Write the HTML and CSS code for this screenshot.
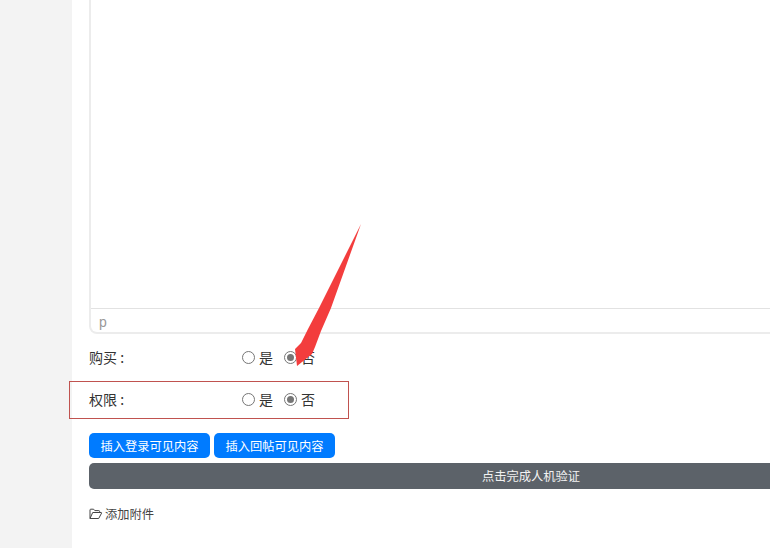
FILE: index.html
```html
<!DOCTYPE html>
<html lang="en">
  <head>
    <meta charset="UTF-8" />
    <title>发帖</title>
    <link rel="stylesheet" href="styles.css">
  </head>
  <body>
    <div class="sidebar"></div>
    <main class="content">
      <div class="editor">
        <div class="editor-body"></div>
        <div class="editor-path">p</div>
      </div>

      <div class="option-row option-buy">
        <div class="option-label">购买 :</div>
        <div class="option-radios">
          <label class="radio"><span class="radio-dot"></span>是</label>
          <label class="radio"><span class="radio-dot checked"></span>否</label>
        </div>
      </div>
      <div class="option-row option-perm">
        <div class="option-label">权限 :</div>
        <div class="option-radios">
          <label class="radio"><span class="radio-dot"></span>是</label>
          <label class="radio"><span class="radio-dot checked"></span>否</label>
        </div>
      </div>

      <div class="insert-buttons">
        <button class="btn btn-blue">插入登录可见内容</button>
        <button class="btn btn-blue">插入回帖可见内容</button>
      </div>
      <button class="btn-verify">点击完成人机验证</button>

      <div class="attach">
        <svg class="attach-icon" viewBox="0 0 14 12" fill="none" stroke="currentColor" stroke-width="1">
          <path d="M1 10.5V2a.8.8 0 0 1 .8-.8h2.8l1.2 1.4h4a.8.8 0 0 1 .8.8v1.1" />
          <path d="M1 10.5h8.7l2.9-5.4a.4.4 0 0 0-.4-.6H3.7z" />
        </svg>
        添加附件
      </div>
    </main>

    <!-- annotation drawn on top of the screenshot -->
    <div class="note-box"></div>
    <svg class="note-arrow" viewBox="0 0 80 150">
      <path d="M72 1 L42 85 L32 108 L26 124 L23 131 L8 143 L6 126 L12 120 L19 106 L30 85 Z" fill="#f33d3d" />
    </svg>
  </body>
</html>
```

FILE: styles.css
```css
* {
  margin: 0;
  padding: 0;
  box-sizing: border-box;
}

html,
body {
  height: 100%;
  overflow: hidden;
}

body {
  display: flex;
  font-family: "Noto Sans CJK SC", "Liberation Sans", sans-serif;
  font-size: 14px;
  color: #333;
  background: #fff;
  position: relative;
}

.sidebar {
  flex: 0 0 72px;
  background: #f3f3f3;
}

.content {
  flex: 0 0 901px;
  padding-left: 17px;
}

.editor {
  height: 334px;
  border: 2px solid #ececec;
  border-top: none;
  border-radius: 0 0 8px 8px;
  display: flex;
  flex-direction: column;
}

.editor-body {
  flex: 1;
}

.editor-path {
  height: 24px;
  line-height: 27px;
  padding-left: 8px;
  border-top: 1px solid #e2e2e2;
  font-family: "Liberation Sans", sans-serif;
  font-size: 14px;
  color: #999;
}

.option-row {
  display: flex;
  align-items: center;
  height: 20px;
}

.option-buy {
  margin-top: 13px;
}

.option-perm {
  margin-top: 22px;
}

.option-label {
  width: 153px;
}

.option-radios {
  display: flex;
  gap: 11px;
}

.radio {
  display: flex;
  align-items: center;
  gap: 4px;
}

.radio-dot {
  width: 13px;
  height: 13px;
  border: 1px solid #767676;
  border-radius: 50%;
  background: #fff;
  position: relative;
}

.radio-dot.checked::after {
  content: "";
  position: absolute;
  top: 2px;
  left: 2px;
  width: 7px;
  height: 7px;
  border-radius: 50%;
  background: #767676;
}

.insert-buttons {
  display: flex;
  gap: 4px;
  margin-top: 24px;
}

.btn {
  height: 25px;
  width: 121px;
  border: none;
  border-radius: 5px;
  font-family: inherit;
  font-size: 12.25px;
  color: #fff;
}

.btn-blue {
  background: #007bff;
}

.btn-verify {
  display: block;
  width: 884px;
  height: 26px;
  margin-top: 5px;
  border: none;
  border-radius: 5px;
  background: #5c6269;
  font-family: inherit;
  font-size: 12.25px;
  color: #f2f2f2;
}

.attach {
  display: flex;
  align-items: center;
  gap: 2px;
  margin-top: 16px;
  font-size: 12.25px;
  color: #444;
}

.attach-icon {
  width: 14px;
  height: 12px;
}

.note-box {
  position: absolute;
  left: 69px;
  top: 381px;
  width: 280px;
  height: 38px;
  border: 1px solid #c0524f;
}

.note-arrow {
  position: absolute;
  left: 289px;
  top: 223px;
  width: 80px;
  height: 150px;
}
```
